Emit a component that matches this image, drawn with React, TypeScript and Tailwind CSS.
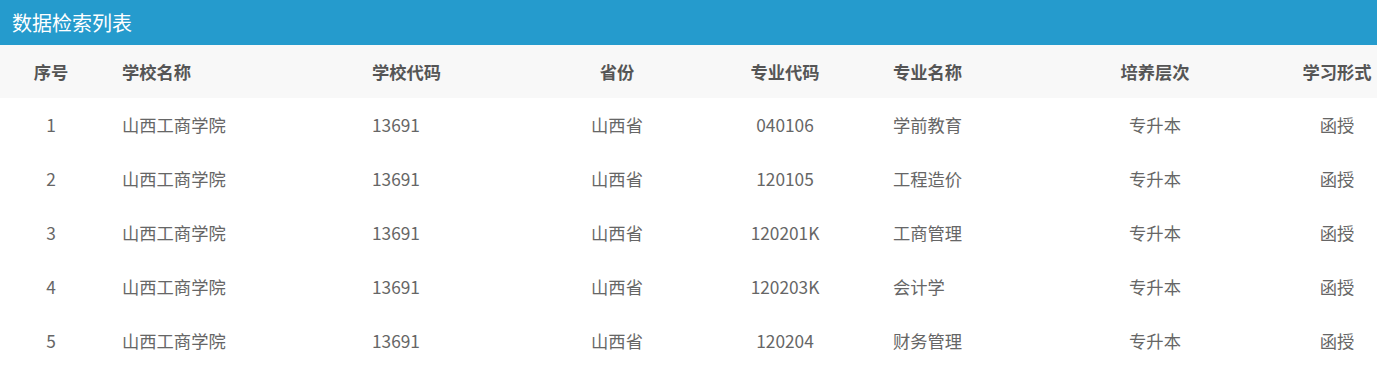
import React from "react";

const cols = "grid grid-cols-[102px_250px_185px_160px_176px_187px_190px_174px]";

const rows = [
  ["1", "山西工商学院", "13691", "山西省", "040106", "学前教育", "专升本", "函授"],
  ["2", "山西工商学院", "13691", "山西省", "120105", "工程造价", "专升本", "函授"],
  ["3", "山西工商学院", "13691", "山西省", "120201K", "工商管理", "专升本", "函授"],
  ["4", "山西工商学院", "13691", "山西省", "120203K", "会计学", "专升本", "函授"],
  ["5", "山西工商学院", "13691", "山西省", "120204", "财务管理", "专升本", "函授"],
];

const align = [
  "justify-center",
  "justify-start pl-5",
  "justify-start pl-5",
  "justify-center",
  "justify-center",
  "justify-start pl-5",
  "justify-center",
  "justify-center",
];

const headers = ["序号", "学校名称", "学校代码", "省份", "专业代码", "专业名称", "培养层次", "学习形式"];

export default function App() {
  return (
    <div
      className="w-[1377px] h-[366px] overflow-hidden bg-white"
      style={{ fontFamily: '"Noto Sans CJK SC", "Noto Sans", sans-serif' }}
    >
      <div className="h-[45px] bg-[#259bcd] flex items-center pl-3 text-white text-[20px]">
        数据检索列表
      </div>
      <div className={`${cols} h-[53px] bg-[#f8f8f8] text-[#555] text-[17.3px] font-bold`}>
        {headers.map((h, i) => (
          <div key={i} className={`flex items-center whitespace-nowrap ${align[i]}`}>
            {h}
          </div>
        ))}
      </div>
      {rows.map((r, ri) => (
        <div key={ri} className={`${cols} h-[54px] text-[#666] text-[17.3px]`}>
          {r.map((c, i) => (
            <div key={i} className={`flex items-center whitespace-nowrap ${align[i]}`}>
              {c}
            </div>
          ))}
        </div>
      ))}
    </div>
  );
}
